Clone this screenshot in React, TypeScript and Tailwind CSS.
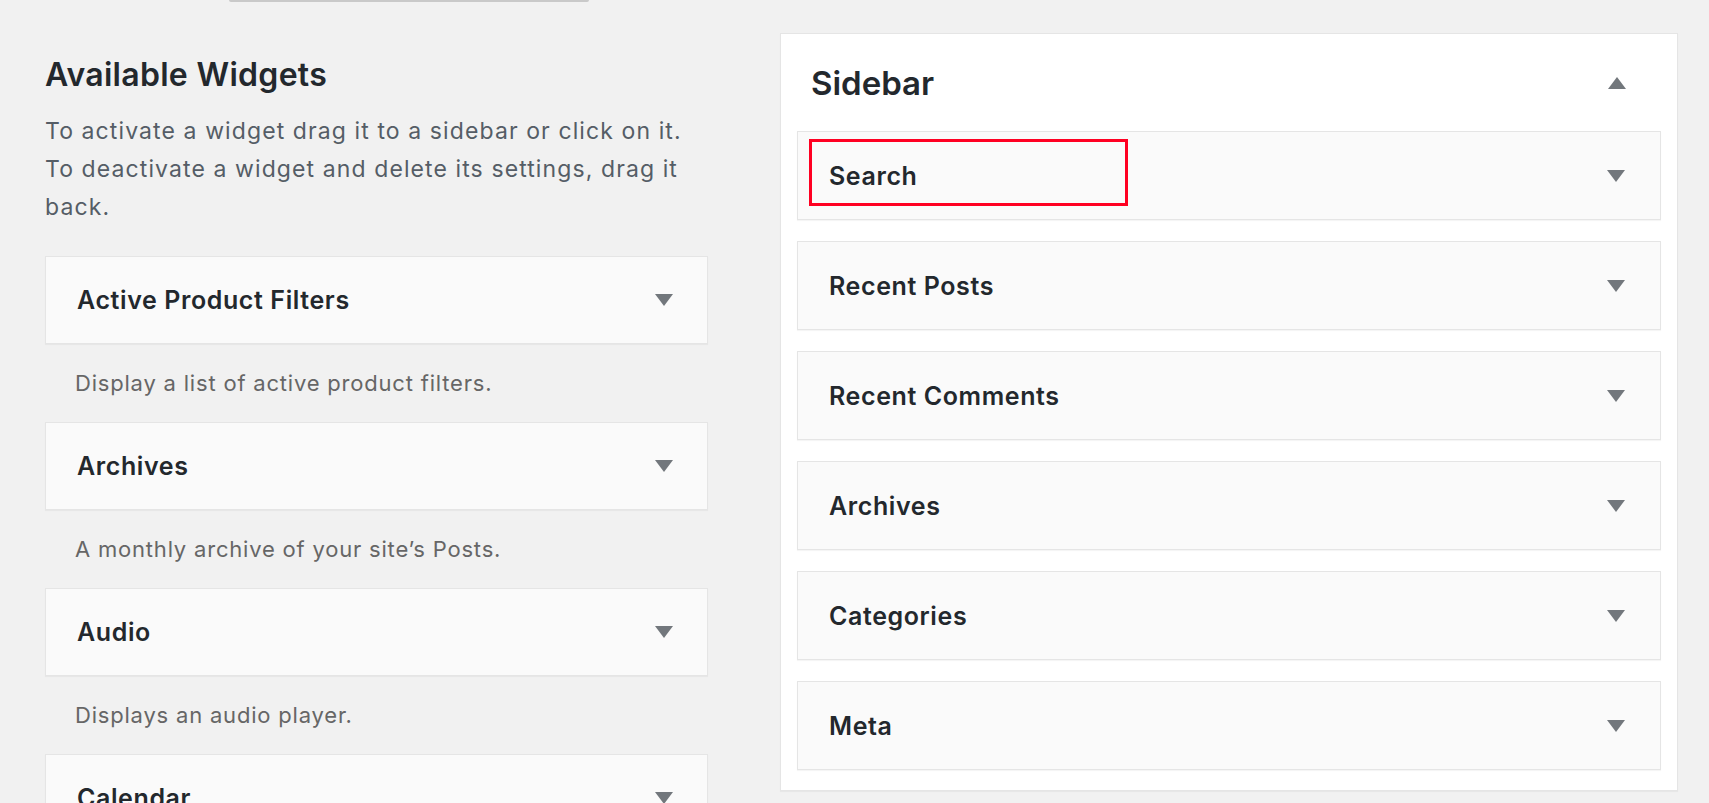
import React from 'react'

const font = { fontFamily: 'Inter, "Noto Sans", sans-serif' }

const available = [
  { title: 'Active Product Filters', desc: 'Display a list of active product filters.' },
  { title: 'Archives', desc: 'A monthly archive of your site’s Posts.' },
  { title: 'Audio', desc: 'Displays an audio player.' },
  { title: 'Calendar', desc: 'A calendar of your site’s Posts.' },
]

const sidebarWidgets = ['Search', 'Recent Posts', 'Recent Comments', 'Archives', 'Categories', 'Meta']

const Caret = ({ up }: { up?: boolean }) => (
  <svg width="18" height="12" viewBox="0 0 18 12" className="shrink-0">
    <polygon points={up ? '9,0 18,12 0,12' : '0,0 18,0 9,12'} fill="#72777c" />
  </svg>
)

const WidgetBox = ({ title, highlight }: { title: string; highlight?: boolean }) => (
  <div className="relative flex h-[89px] items-center justify-between border border-[#e5e5e5] bg-[#fafafa] pl-[31px] pr-[35px] shadow-[0_1px_1px_rgba(0,0,0,0.04)]">
    <h3 className="text-[25px] font-semibold leading-[30px] tracking-[0.6px] text-[#23282d]">{title}</h3>
    <Caret />
    {highlight && (
      <div className="absolute left-[11px] top-[7px] h-[67px] w-[319px] border-[3px] border-[#ff0022]" />
    )}
  </div>
)

export default function App() {
  return (
    <div className="h-[803px] overflow-hidden bg-[#f1f1f1]" style={font}>
      {/* clipped toolbar above */}
      <div className="flex h-[3px] items-start">
        <div className="ml-[229px] h-[2px] w-[360px] rounded-b bg-[#c9c9c9]" />
      </div>

      <div className="flex pl-[45px]">
        <div className="w-[663px] shrink-0 pt-[52px]">
          <h2 className="text-[32px] font-semibold leading-[40px] tracking-[0.3px] text-[#23282d]">Available Widgets</h2>
          <p className="mt-[17px] whitespace-nowrap text-[23px] leading-[38px] tracking-[1.1px] text-[#555d66]">
            To activate a widget drag it to a sidebar or click on it.
            <br />
            To deactivate a widget and delete its settings, drag it
            <br />
            back.
          </p>
          <div className="mt-[30px] flex flex-col">
            {available.map((w) => (
              <div key={w.title}>
                <div className="flex h-[88px] items-center justify-between border border-[#e5e5e5] bg-[#fafafa] pl-[31px] pr-[34px] shadow-[0_1px_1px_rgba(0,0,0,0.04)]">
                  <h3 className="text-[25px] font-semibold leading-[30px] tracking-[0.6px] text-[#23282d]">{w.title}</h3>
                  <Caret />
                </div>
                <p className="py-[20px] pl-[30px] text-[22px] leading-[38px] tracking-[0.8px] text-[#666]">{w.desc}</p>
              </div>
            ))}
          </div>
        </div>

        <div className="ml-[72px] mt-[30px] h-[758px] w-[898px] shrink-0 border border-[#e5e5e5] bg-white px-[16px] pb-[20px] shadow-[0_1px_1px_rgba(0,0,0,0.04)]">
          <div className="flex h-[97px] items-center justify-between pl-[14px] pr-[35px]">
            <h2 className="text-[33px] font-semibold leading-[40px] text-[#23282d]">Sidebar</h2>
            <Caret up />
          </div>
          <div className="flex flex-col gap-[21px]">
            {sidebarWidgets.map((t, i) => (
              <WidgetBox key={t} title={t} highlight={i === 0} />
            ))}
          </div>
        </div>
      </div>
    </div>
  )
}
